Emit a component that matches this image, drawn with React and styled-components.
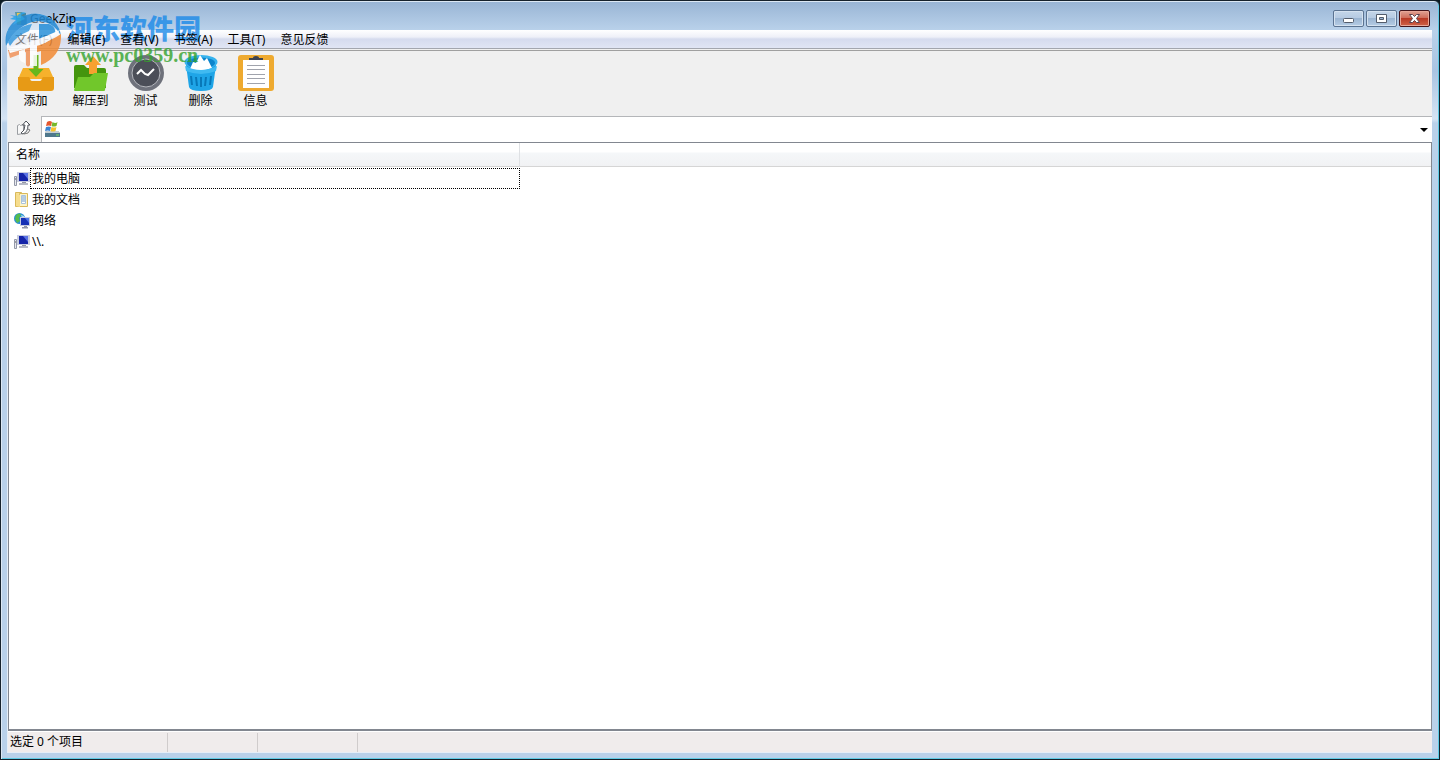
import React, { useState } from 'react';
import styled, { createGlobalStyle } from 'styled-components';

const GlobalStyle = createGlobalStyle`
  * { box-sizing: border-box; }
  body { margin: 0; background: #0b1a22; font: 12px/16px "Noto Sans", "Noto Sans CJK SC", sans-serif; color: #000; }
  button, input { font: inherit; color: inherit; margin: 0; padding: 0; border: 0; background: none; }
  svg { display: block; flex: none; }
`;

const Window = styled.div`
  position: relative; display: flex; flex-direction: column; height: 100vh; padding: 0 7px 6px 6px;
  border: 1px solid #16222c; border-radius: 6px 6px 0 0;
  box-shadow: inset 1px 1px 0 #dce8f4, inset -1px -1px 0 #5ecbe6;
  background: linear-gradient(#98b4d4 0, #b9d1ea 29px, #a9c4e2 70px, #d5e4f4 118px, #b9d1ea 122px, #b9d1ea 100%);
`;

const TitleBar = styled.header`
  display: flex; align-items: flex-start; height: 29px; padding: 9px 2px 0 7px;
  h1 { position: relative; z-index: 1; flex: 1; margin: 0 0 0 2px; font-size: 12px; line-height: 18px; font-weight: 400; }
`;

const WindowButtons = styled.div`
  display: flex; gap: 2px;
`;

const WindowButton = styled.button`
  display: flex; align-items: center; justify-content: center; width: 31px; height: 17px; border-radius: 2px;
  border: 1px solid ${p => p.$close ? '#43141a' : '#5b7391'};
  box-shadow: inset 0 0 0 1px ${p => p.$close ? '#e8a798' : '#d5e2f0'};
  background: ${p => p.$close
    ? 'linear-gradient(#e0a294 0, #cf6b58 48%, #b93a25 50%, #cf6348 100%)'
    : 'linear-gradient(#c5d6e9 0, #b5cae2 48%, #9bb5d2 50%, #b6cde5 100%)'};
`;

const Client = styled.main`
  flex: 1; display: flex; flex-direction: column; min-height: 0; background: #f0f0f0;
  border: 1px solid #e6eef7; border-width: 0 0 1px 1px;
`;

const MenuBar = styled.nav`
  display: flex; gap: 15px; height: 19px; padding: 1px 7px 0;
  border-bottom: 1px solid #a3a6ae;
  background: linear-gradient(#fff 0, #eef0f8 7px, #d5dbee 9px, #e0e5f4 100%);
  button { position: relative; z-index: 1; line-height: 18px; white-space: nowrap; }
`;

const ToolBar = styled.div`
  display: flex; height: 66px; padding-top: 4px; margin-top: 1px; border-top: 1px solid #a0a0a0;
`;

const ToolButton = styled.button`
  display: flex; flex-direction: column; align-items: center; justify-content: flex-start; gap: 2px; width: 55px;
  span { line-height: 16px; }
`;

const AddressRow = styled.div`
  display: flex; height: 26px;
`;

const UpButton = styled.button`
  display: flex; align-items: center; justify-content: center; width: 33px; padding: 0 2px 2px 0;
`;

const AddressBox = styled.label`
  flex: 1; display: flex; align-items: center; gap: 4px; padding: 0 4px 0 2px; background: #fff;
  border: 1px solid #b4b6b9; border-width: 1px 0 0 1px;
  input { flex: 1; outline: none; }
`;

const ListView = styled.div`
  flex: 1; min-height: 0; overflow: auto; background: #fff;
  border: 1px solid #828790; border-bottom-width: 2px;
`;

const FileTable = styled.table`
  width: 100%; table-layout: fixed; border-collapse: separate; border-spacing: 0;
  th { height: 24px; padding: 1px 7px 0; text-align: left; font-weight: 400; background: linear-gradient(#fff 0, #fff 9px, #f5f7f9 10px, #f1f2f4 100%); border-bottom: 1px solid #d5d5d5; }
  th:first-child { width: 511px; border-right: 1px solid #dfe1e4; }
  td { height: 21px; padding: 0 0 0 5px; }
  tbody::before { content: ''; display: table-row; height: 1px; }
`;

const FileName = styled.div`
  display: flex; align-items: center; height: 21px;
  span { flex: 1; height: 21px; padding-left: 1px; line-height: 19px; border: 1px dotted ${p => p.$focused ? '#000' : 'transparent'}; }
`;

const StatusBar = styled.footer`
  display: flex; height: 21px; padding-top: 1px; background: #f0ecec; border-top: 1px solid #fff;
`;

const StatusCell = styled.div`
  width: ${p => p.$width}px; padding-left: 2px; line-height: 18px; border-right: 1px solid #d0cccc;
`;

const Watermark = styled.div`
  position: absolute; left: 2px; top: 9px; display: flex; gap: 5px; pointer-events: none;
  svg { position: relative; z-index: 2; }
`;

const WatermarkText = styled.div`
  padding-top: 1px; opacity: .8; white-space: nowrap;
  strong { display: block; font: 900 27px/34px "Noto Sans CJK SC", sans-serif; color: #1b8ae8; }
  em { display: block; font: 700 20px/20px "Liberation Serif", serif; color: #35a32e; }
`;

const AppIcon = () => (
  <svg width="14" height="16" viewBox="0 0 14 16">
    <path d="M1 2h7l5 5v8H3z" fill="#5b9aa6" />
    <path d="M3 3h4v5H3z" fill="#f0c44c" />
    <path d="M7 3h5v12H7z" fill="#47849a" />
    <path d="M3 9h4v5H3z" fill="#78b759" />
  </svg>
);

const AddIcon = () => (
  <svg width="36" height="36" viewBox="0 0 36 36">
    <path d="M5 13h26l5 11H0z" fill="#f6b12c" />
    <path d="M0 22h11c1 0 1 4 3 4h8c2 0 2-4 3-4h11v11q0 3-3 3H3q-3 0-3-3z" fill="#e79a16" />
    <path d="M15.500 0h5v14h5L18 22l-7.500-8h5z" fill="#68b71c" />
  </svg>
);

const ExtractIcon = () => (
  <svg width="36" height="36" viewBox="0 0 36 36">
    <path d="M1 12q0-2 2-2h8l3 3h17q2 0 2 2v18H1z" fill="#44950e" />
    <path d="M20 1l8 9h-4v9h-8v-9h-4z" fill="#f7a12f" />
    <path d="M5 22h12l4-4h14l-3 17q0 1-1 1H2q-1 0-1-1z" fill="#71c72b" />
  </svg>
);

const TestIcon = () => (
  <svg width="36" height="36" viewBox="0 0 36 36">
    <circle cx="18" cy="18" r="18" fill="#6e717b" />
    <circle cx="18" cy="18" r="14" fill="#4b4e58" stroke="#b5b7bd" />
    <path d="M9 19l4-4 4 4 3 1 6-6" fill="none" stroke="#fff" strokeWidth="2" />
  </svg>
);

const DeleteIcon = () => (
  <svg width="36" height="36" viewBox="0 0 36 36">
    <path d="M3 10h30l-3 22q-1 4-12 4T6 32z" fill="#1fa5e7" />
    <ellipse cx="18" cy="7" rx="16.500" ry="7" fill="#37b3ee" />
    <ellipse cx="18" cy="8" rx="14" ry="5.500" fill="#0d85cc" />
    <path d="M7 14l3-7 3 1 4-8 4 6 3-3 5 10q-10 4-22 1z" fill="#fff" />
    <path d="M2 11q16 8 32 0l-1 5q-15 6-30 0z" fill="#40baf1" />
    <path d="M8 21l1 9M13 22l1 9M18 22v10M23 22l-1 9M28 21l-1 9" stroke="#0878b8" strokeWidth="2" />
  </svg>
);

const InfoIcon = () => (
  <svg width="36" height="36" viewBox="0 0 36 36">
    <rect width="36" height="36" rx="3" fill="#eeaa30" />
    <path d="M5 5h26v28H5z" fill="#fff" />
    <path d="M11 5V3h4q0-2 3-2t3 2h4v2z" fill="#3d4350" />
    <path d="M9 10.500h18M9 14.500h18M9 19.500h18M9 23.500h18M9 28.500h18" stroke="#a0a3ac" />
  </svg>
);

const UpIcon = () => (
  <svg width="16" height="16" viewBox="0 0 16 16">
    <path d="M1.500 5.500l2-1 1 1 3-1v9l-6 1z" fill="#f8f8f8" stroke="#9b9ea2" />
    <path d="M5 13q4-2 4-8H6.500l3.500-4 4 4h-2q0 7-5 9z" fill="#fff" stroke="#4e535a" />
    <path d="M12 9l2 1-2 3-4 1" fill="none" stroke="#777" />
  </svg>
);

const ComputerRootIcon = () => (
  <svg width="17" height="17" viewBox="0 0 17 17">
    <path d="M2 10h12l2 2v4H1v-4z" fill="#8699a6" />
    <path d="M1 12h15v4H1z" fill="#4f788c" />
    <path d="M2 10h12l2 2H1z" fill="#c3ced4" />
    <path d="M3 1q3-2 5 0L7 5Q5 4 2 5z" fill="#e4572e" />
    <path d="M8.500 1q3 2 5 0l-1 4q-3 1-5 0z" fill="#76b82a" />
    <path d="M2 6q3-1 5 0l-1 4q-2-1-5 0z" fill="#3a84d2" />
    <path d="M7.500 6q3 1 5 0l-1 4q-3 1-5 0z" fill="#f7c22d" />
    <path d="M12 14h3" stroke="#7fe05a" />
  </svg>
);

const ComputerIcon = () => (
  <svg width="16" height="16" viewBox="0 0 16 16">
    <path d="M.500 5.500h2v9h-2z" fill="#e8eaf0" stroke="#9398a8" />
    <path d="M1 8h1" stroke="#555" />
    <path d="M3 1h13v10H3z" fill="#c9cde0" />
    <path d="M5 2h9v8H5z" fill="#1524a8" />
    <path d="M9 2h5v6z" fill="#5972e3" />
    <path d="M8 11h4v2H8z" fill="#9195a4" />
    <path d="M5 12h9v2H5z" fill="#b7bac6" />
  </svg>
);

const DocumentsIcon = () => (
  <svg width="16" height="16" viewBox="0 0 16 16">
    <path d="M1.500.500h6v14h-6z" fill="#f8e39b" stroke="#d9b95a" />
    <path d="M5.500 1.500h8v13h-8z" fill="#fdf3c8" stroke="#d9b95a" />
    <path d="M7.500 3.500h4v8h-4z" fill="#fff" stroke="#a9c3dc" />
    <path d="M8 5h3M8 7h3M8 9h3" stroke="#6f9ac6" />
    <path d="M2 1l4 2v12l-4-1z" fill="#f6dd8d" />
  </svg>
);

const NetworkIcon = () => (
  <svg width="16" height="16" viewBox="0 0 16 16">
    <circle cx="5.500" cy="5.500" r="5.500" fill="#2d8fd5" />
    <path d="M2 2q4-3 5 0L5 5l1 3-3 2-2-4z" fill="#55bc4d" />
    <path d="M7 2l3 1v2H8z" fill="#a9dff1" />
    <path d="M6 4h10v9H6z" fill="#c6cbe0" />
    <path d="M7 5h8v7H7z" fill="#1630b5" />
    <path d="M11 5h4v5z" fill="#4d72e7" />
    <path d="M10 13h3v1h1v1.500H8V14h2z" fill="#8f94a6" />
  </svg>
);

const WatermarkLogo = () => (
  <svg width="58" height="62" viewBox="3 10 58 62" opacity=".85">
    <path d="M6 42Q6 24 22 17Q38 9 52 19Q60 26 61 36Q50 46 34 50H9Q6 47 6 42z" fill="#fff" opacity=".55" />
    <path d="M6 46Q3 28 19 18Q38 8 53 20Q60 27 61 36Q54 22 38 21Q18 23 6 46z" fill="#258bd5" />
    <path d="M10 15l7 1 2-2q4-3 7-1l-5 2 4 4-7 3-5 3 3-5-6-1 4-2z" fill="#26a2ea" />
    <path d="M8 42Q16 26 32 24L29 31Q16 36 10 46z" fill="#3b9cdf" />
    <path d="M39 24h10q8 3 6 11-8 7-16 9z" fill="#2a91d9" />
    <path d="M8 50Q18 47 30 43v22q-2 3-4 0V52l-16 6z" fill="#f0935a" />
    <path d="M37 45Q51 41 61 34Q62 56 41 65V51l-4 1z" fill="#f28b35" />
    <path d="M8 48Q34 42 60 30Q52 41 40 45L10 53z" fill="#fff" />
    <path d="M19 51l6-2v14q-5-1-6-5z" fill="#fff" />
    <path d="M30 43l7-2v25h-7z" fill="#fff" />
  </svg>
);

const MinimizeGlyph = () => (
  <svg width="13" height="11" viewBox="0 0 13 11">
    <rect x="1.500" y="5.500" width="10" height="4" rx="1" fill="#fff" stroke="#535c6b" />
  </svg>
);

const MaximizeGlyph = () => (
  <svg width="13" height="11" viewBox="0 0 13 11">
    <path fillRule="evenodd" d="M1.500 1.500h10v8h-10zM4.500 4.500h4v2h-4z" fill="#fff" stroke="#535c6b" />
  </svg>
);

const CloseGlyph = () => (
  <svg width="13" height="11" viewBox="0 0 13 11">
    <path d="M1.500 1.500h3l2 2 2-2h3L8.500 5.500l3 4h-3l-2-2-2 2h-3l3-4z" fill="#fff" stroke="#5b4450" />
  </svg>
);

const menus = ['文件(F)', '编辑(E)', '查看(V)', '书签(A)', '工具(T)', '意见反馈'];

const tools = [
  { label: '添加', Icon: AddIcon },
  { label: '解压到', Icon: ExtractIcon },
  { label: '测试', Icon: TestIcon },
  { label: '删除', Icon: DeleteIcon },
  { label: '信息', Icon: InfoIcon },
];

const files = [
  { name: '我的电脑', Icon: ComputerIcon },
  { name: '我的文档', Icon: DocumentsIcon },
  { name: '网络', Icon: NetworkIcon },
  { name: '\\\\.', Icon: ComputerIcon },
];

const App = () => {
  const [focused, setFocused] = useState(0); // focused row
  const [path, setPath] = useState('');

  return (
    <>
      <GlobalStyle />
      <Window>
        <TitleBar>
          <AppIcon />
          <h1>GeekZip</h1>
          <WindowButtons>
            <WindowButton aria-label="最小化"><MinimizeGlyph /></WindowButton>
            <WindowButton aria-label="最大化"><MaximizeGlyph /></WindowButton>
            <WindowButton $close aria-label="关闭"><CloseGlyph /></WindowButton>
          </WindowButtons>
        </TitleBar>
        <Client>
          <MenuBar>
            {menus.map(t => <button key={t}>{t}</button>)}
          </MenuBar>
          <ToolBar>
            {tools.map(({ label, Icon }) => (
              <ToolButton key={label}><Icon /><span>{label}</span></ToolButton>
            ))}
          </ToolBar>
          <AddressRow>
            <UpButton aria-label="向上"><UpIcon /></UpButton>
            <AddressBox>
              <ComputerRootIcon />
              <input aria-label="地址" value={path} onChange={e => setPath(e.target.value)} />
              <button aria-label="展开">
                <svg width="8" height="4" viewBox="0 0 8 4"><path d="M0 0h8L4 4z" /></svg>
              </button>
            </AddressBox>
          </AddressRow>
          <ListView>
            <FileTable>
              <thead>
                <tr><th>名称</th><th></th></tr>
              </thead>
              <tbody>
                {files.map(({ name, Icon }, index) => (
                  <tr key={name} onClick={() => setFocused(index)}>
                    <td><FileName $focused={index === focused}><Icon /><span>{name}</span></FileName></td>
                    <td></td>
                  </tr>
                ))}
              </tbody>
            </FileTable>
          </ListView>
          <StatusBar>
            <StatusCell $width={160}>选定 0 个项目</StatusCell>
            <StatusCell $width={90} />
            <StatusCell $width={100} />
          </StatusBar>
        </Client>
        <Watermark>
          <WatermarkLogo />
          <WatermarkText>
            <strong>河东软件园</strong>
            <em>www.pc0359.cn</em>
          </WatermarkText>
        </Watermark>
      </Window>
    </>
  );
};

export default App;
